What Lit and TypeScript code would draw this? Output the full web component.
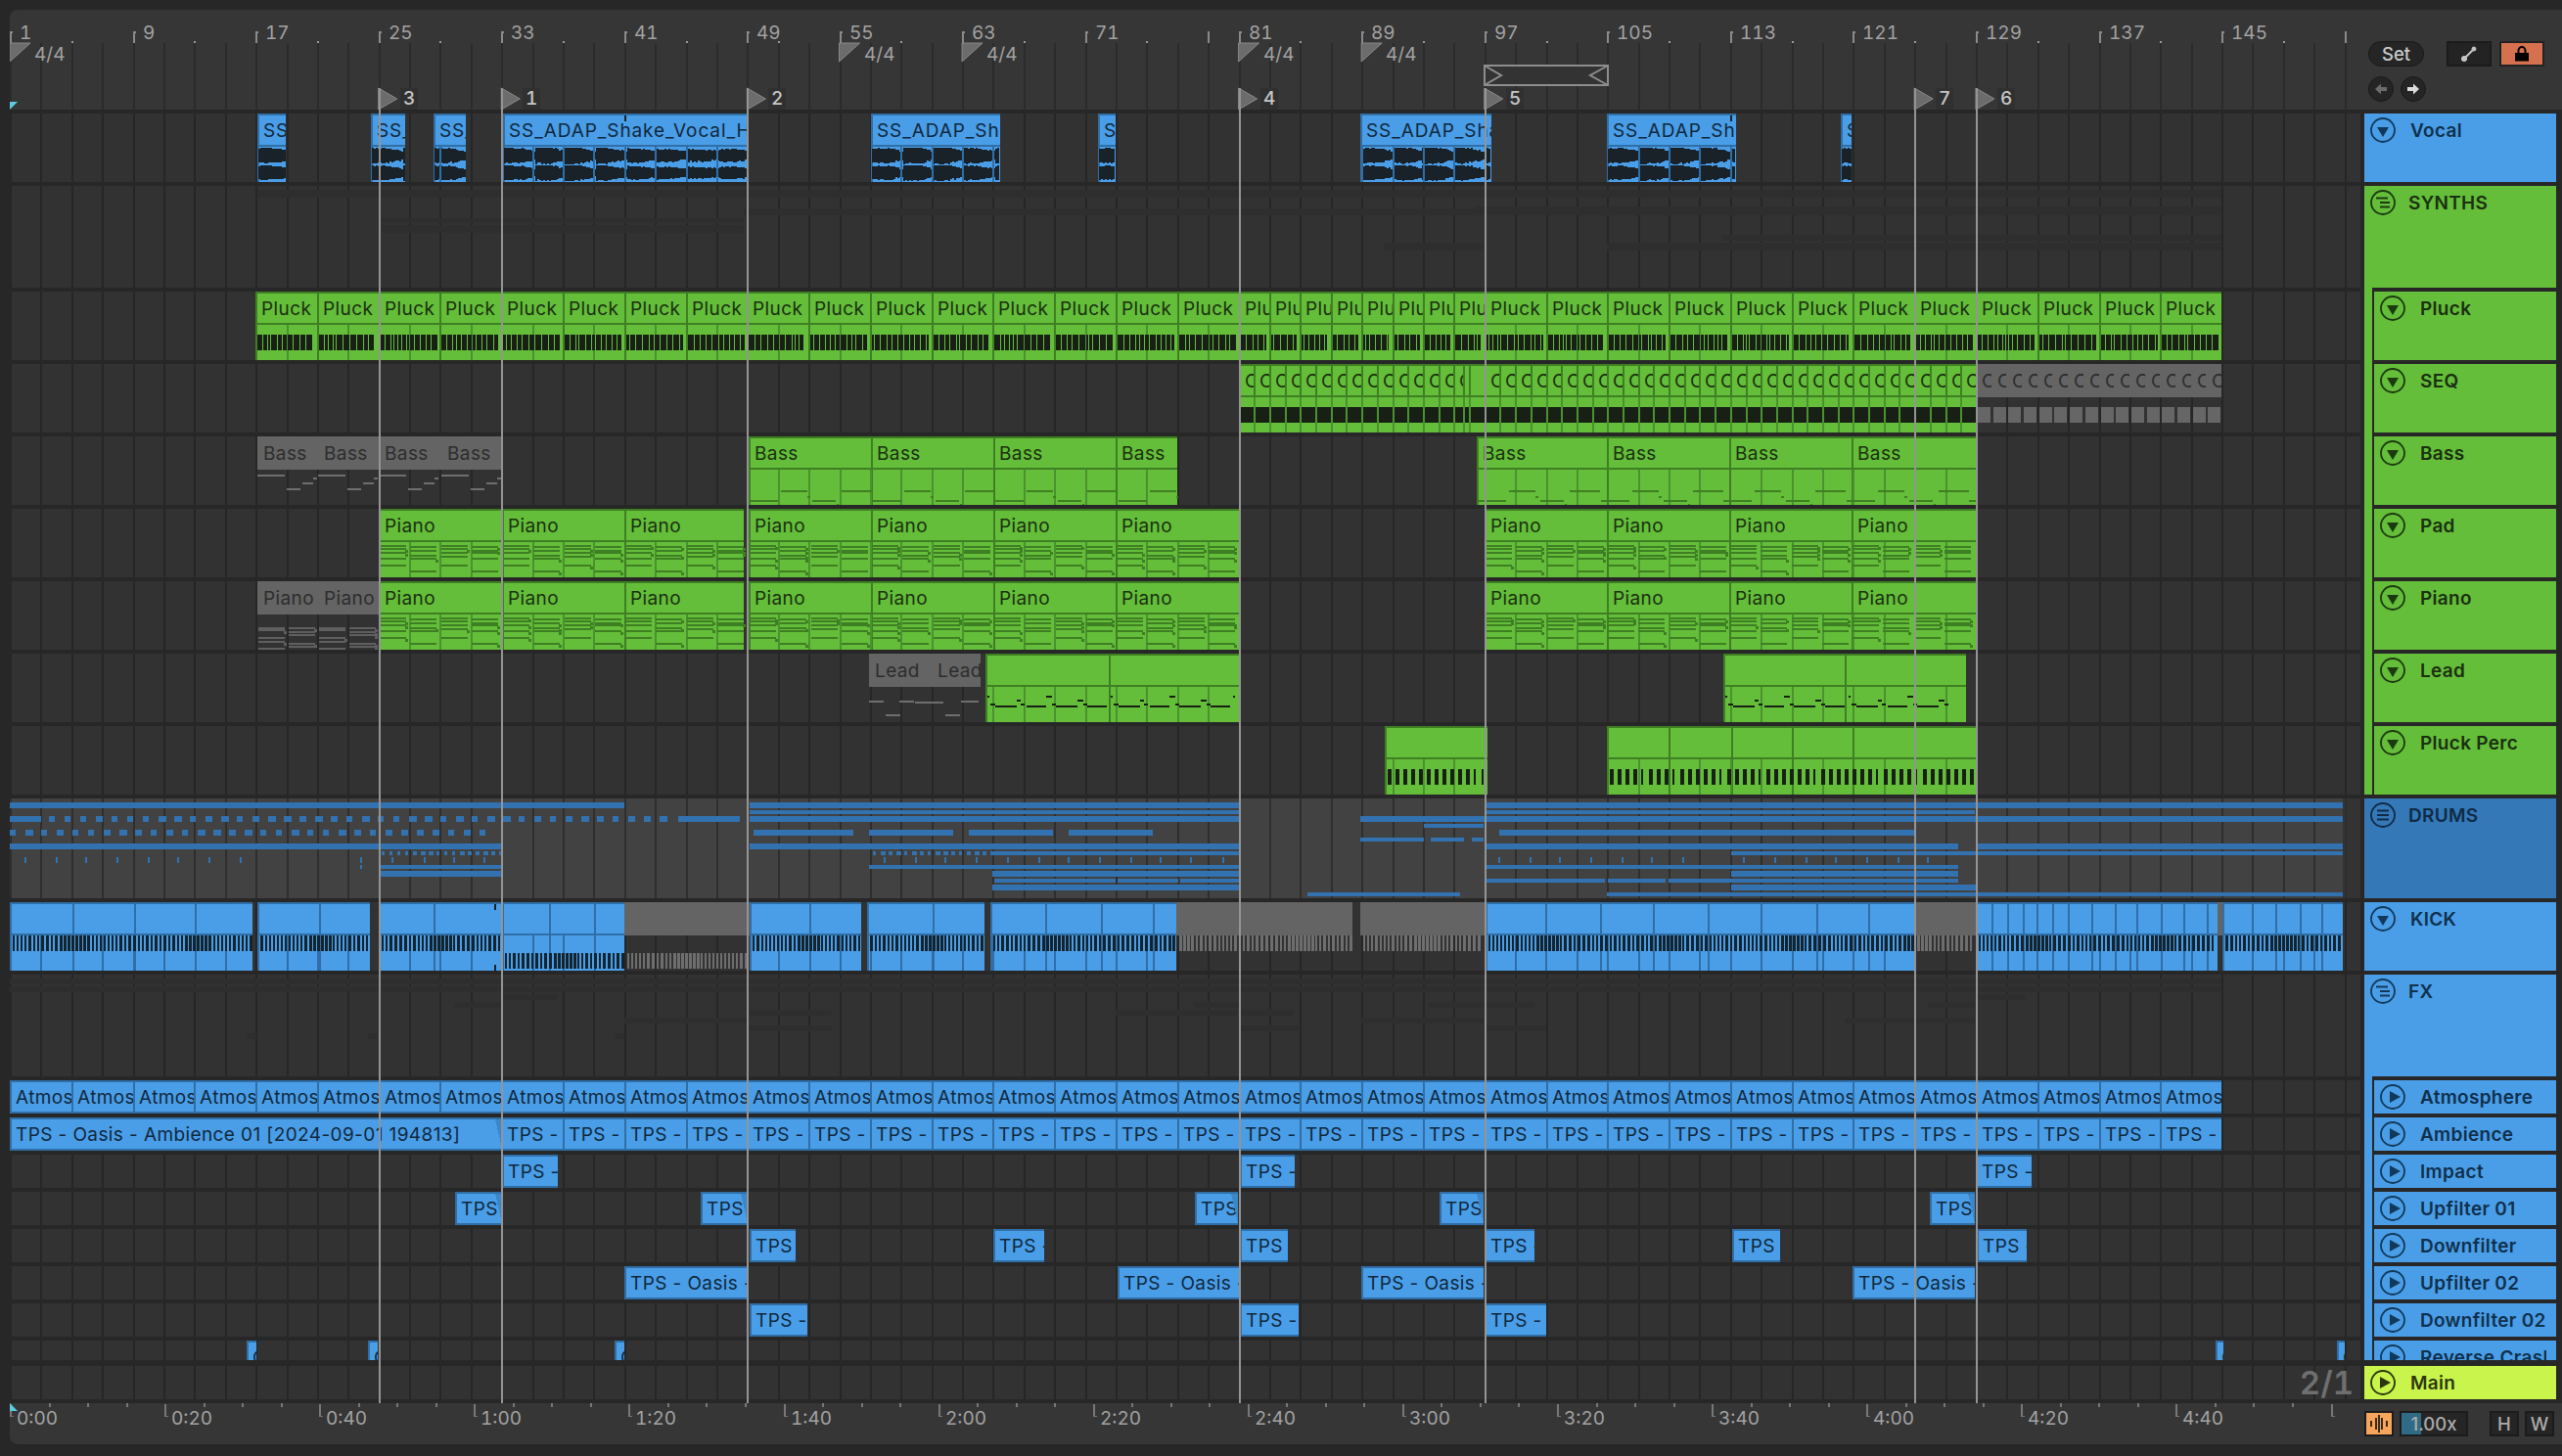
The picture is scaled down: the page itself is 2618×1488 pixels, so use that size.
import { LitElement, html, svg, css, nothing } from 'lit'
import { customElement } from 'lit/decorators.js'

const BAR = 15.695
const X0 = 10
const GRID = BAR * 2
const bx = (b: number) => X0 + (b - 1) * BAR

type Kind = 'g' | 'b' | 'x' | 'bs'
interface Clip { x: number; e: number; k: Kind; label?: string }
interface Mark { x: number; y: number; w: number; h: number; f: string }
interface Poly { p: string; f: string }
interface Row {
  name: string; h: number; color: string; icon: 'down' | 'play' | 'lines' | 'stagger'
  nested?: boolean; drums?: boolean; clips: Clip[]; marks: Mark[]; polys?: Poly[]
}

const G_LINE = '#4a9230'
const G_DARK = '#3f7f24'
const B_LINE = '#2f6ea6'
const INK = '#182016'
const WAVE = '#192229'
const KICK = '#14242f'
const GREY = '#6e6e6e'
const FAINT = '#2e2e2e'
const DRUM = '#3272b0'

let seed = 4711
const rnd = () => (seed = (seed * 16807) % 2147483647) / 2147483647

function segs(starts: number[], end: number, k: Kind, label?: string): Clip[] {
  return starts.map((x, i) => ({ x, e: starts[i + 1] ?? end, k, label }))
}
const range = (a: number, b: number, step: number) => {
  const out: number[] = []
  for (let v = a; v < b; v += step) out.push(v)
  return out
}
const bars = (a: number, b: number, step: number) => range(a, b, step).map(bx)

function gridIn(x0: number, x1: number, y: number, h: number, f: string): Mark[] {
  const out: Mark[] = []
  for (let i = 0; i < 80; i++) {
    const x = X0 + i * GRID
    if (x > x0 + 1 && x < x1 - 1) out.push({ x, y, w: 2, h, f })
  }
  return out
}

function pluckBars(x0: number, x1: number, y = 44, h = 16): Mark[] {
  const out: Mark[] = []
  const widths = [4, 5, 5, 4, 6, 3, 5, 2, 6]
  let x = x0 + 2
  while (x < x1 - 4) {
    const w = widths[Math.floor(rnd() * widths.length)]
    out.push({ x, y, w: Math.min(w, x1 - 3 - x), h, f: INK })
    x += w + 1
  }
  return out
}

function percBars(x0: number, x1: number): Mark[] {
  const out: Mark[] = []
  for (let x = x0 + 3; x < x1 - 2; x += 8) {
    const w = rnd() < 0.15 ? 2 : 4
    out.push({ x, y: 44, w, h: 16, f: INK })
  }
  return out
}

function kickBars(x0: number, x1: number, y: number, f: string): Mark[] {
  const out: Mark[] = []
  let x = Math.round(x0) + 3
  while (x < x1 - 2) {
    const p = (x - 10) % 125.5
    const dense = p > 50 && p < 76
    const w = dense ? 3 : rnd() < 0.45 ? 3 : 2
    out.push({ x, y, w, h: 16, f })
    x += w + (dense ? 1 : 2)
  }
  return out
}

function wave(x0: number, x1: number): Mark[] {
  const out: Mark[] = []
  for (let x = x0 + 1; x < x1 - 1; x += 2) {
    const t = ((x - x0) % GRID) / GRID
    const slow = 0.75 + 0.25 * Math.sin((x - x0) / 40)
    const a = 3.4 + 4.4 * slow * (1 - t * t * t) + rnd() * 1.3
    const h = Math.min(a, 8.5) * 2
    out.push({ x, y: 43 - h / 2, w: 2, h, f: WAVE })
    out.push({ x, y: 61 - h / 2, w: 2, h: h * 0.95, f: WAVE })
  }
  return out
}

const PIANO_LINES = [
  [37, 40, 44, 50, 57],
  [38, 42, 47, 50, 63],
  [37, 40, 44, 48, 57],
  [38, 42, 44, 50, 63],
]

function pianoNotes(x0: number, x1: number, f: string, lines = PIANO_LINES): Mark[] {
  const out: Mark[] = []
  let i = 0
  for (let x = x0 + 1; x < x1 - 2; x += GRID, i++) {
    for (const y of lines[i % 4]) {
      out.push({ x, y, w: Math.min(27, x1 - x), h: 2, f })
      if (rnd() < 0.45) out.push({ x: x + 26, y: y + 2, w: 3, h: 3, f })
    }
  }
  return out
}

function bassNotes(x0: number, x1: number): Mark[] {
  const out: Mark[] = []
  const pat: [number, number, number][] = [[0, 29, 65], [32, 59, 55], [59, 62, 61], [64, 88, 65], [89, 91, 69], [94, 125, 55]]
  for (let b = x0; b < x1; b += 125.5) {
    for (const [a, e, y] of pat) {
      if (b + a < x1) out.push({ x: b + a + 1, y, w: Math.min(e - a, x1 - b - a - 1), h: 2, f: G_DARK })
    }
  }
  return out
}

function leadNotes(x0: number, x1: number): Mark[] {
  const out: Mark[] = []
  const pat: [number, number, number][] = [
    [2, 4, 43], [5, 10, 51], [10, 32, 53], [32, 36, 47], [36, 40, 51], [42, 62, 53],
    [62, 68, 43], [68, 72, 51], [72, 94, 53], [94, 100, 47], [100, 104, 51], [104, 124, 53],
  ]
  for (let b = x0; b < x1; b += 125.5) {
    for (const [a, e, y] of pat) {
      if (b + e <= x1) out.push({ x: b + a, y, w: e - a, h: 2, f: INK })
    }
  }
  return out
}

function greenBody(clips: Clip[], notes: (c: Clip) => Mark[]): Mark[] {
  return clips.flatMap(c => (c.k === 'g' ? [...gridIn(c.x, c.e, 34, 36, G_LINE), ...notes(c)] : notes(c)))
}

const strip = (x: number, e: number, y: number, h: number, f = DRUM): Mark => ({ x, y, w: e - x, h, f })
function dashes(x0: number, x1: number, y: number, h: number, step: number, w: number): Mark[] {
  const out: Mark[] = []
  for (let x = x0; x < x1; x += step) {
    const n = w - Math.floor(rnd() * 3)
    out.push({ x: Math.round(x), y, w: n, h, f: DRUM })
  }
  return out
}

function buildDrums(): Mark[] {
  // row local y is absolute y minus 816
  const t = [
    25, 57, 87, 119, 151, 181, 213, 245, 368, 400, 433, 463, 494, 903, 935, 965, 997, 1029, 1061, 1091, 1123, 1155,
    1185, 1216, 1249, 1531, 1563, 1593, 1625, 1657, 1687, 1719, 1781, 1813, 1845, 1875, 1907, 1939, 1969,
  ]
  return [
    strip(10, 638, 4, 6), strip(766, 1266, 4, 6), strip(1517, 2394, 4, 6),
    strip(766, 1266, 12, 4), strip(1517, 2018, 12, 4),
    strip(10, 42, 18, 6), ...dashes(50, 690, 18, 6, 16, 8), strip(693, 756, 18, 6), strip(766, 1266, 18, 6), strip(1390, 2394, 18, 6),
    strip(1455, 1516, 26, 4),
    ...dashes(10, 505, 32, 6, 16, 8), strip(770, 872, 32, 6), strip(888, 974, 32, 6), strip(990, 1076, 32, 6), strip(1092, 1178, 32, 6), strip(1532, 1956, 32, 6),
    strip(1390, 1455, 40, 4), strip(1462, 1496, 40, 4), strip(1504, 1516, 40, 4),
    strip(10, 513, 46, 6), strip(766, 1266, 46, 6), strip(1518, 2001, 46, 6), strip(2019, 2394, 46, 6),
    ...dashes(390, 513, 54, 4, 8, 5), ...dashes(892, 1013, 54, 4, 8, 5), strip(1013, 1266, 54, 4), strip(1769, 2394, 54, 4),
    ...t.map(x => ({ x, y: 60, w: 2, h: 6, f: DRUM })),
    { x: 368, y: 68, w: 2, h: 4, f: DRUM }, strip(388, 513, 68, 4), strip(888, 1266, 68, 4), strip(1518, 2001, 68, 4),
    strip(388, 513, 74, 6), strip(1014, 1266, 74, 6), strip(1769, 2001, 74, 6),
    strip(1016, 1140, 82, 4), strip(1142, 1204, 82, 4), strip(1206, 1266, 82, 4), strip(1518, 1640, 82, 4), strip(1643, 1702, 82, 4), strip(1705, 2001, 82, 4),
    strip(1014, 1266, 88, 6), strip(1769, 2021, 88, 6),
    strip(1336, 1492, 96, 4), strip(1642, 2394, 96, 4),
  ]
}

function buildRows(): Row[] {
  const vocal: Clip[] = [
    [263, 292], [379, 414], [443, 476], [514, 764], [890, 1022], [1122, 1140], [1390, 1524], [1642, 1774], [1881, 1892],
  ].map(([x, e]) => ({ x, e, k: 'b', label: 'SS_ADAP_Shake_Vocal_Hook' }))

  const pluckStarts = [...bars(17, 81, 4), ...bars(81, 97, 2), ...bars(97, 145, 4)]
  const pluck = segs(pluckStarts, bx(145), 'g', 'Pluck')

  const seqStarts = [...bars(81, 95.4, 1), 1495, 1501, ...bars(97, 129, 1)]
  const seq = seqStarts.map((x, i): Clip => {
    const label = x === 1495 || x === 1501 ? undefined : 'C'
    return { x, e: seqStarts[i + 1] ?? bx(129), k: 'g', label }
  })
  const seqGrey = segs(bars(129, 145, 1), bx(145), 'x', 'C')

  const bassGreen = [...segs([765, 890, 1015, 1140], 1203, 'g', 'Bass'), ...segs([1509, 1642, 1767, 1892], 2019, 'g', 'Bass')]
  const bassGrey = segs([263, 325, 387, 451], 514, 'x', 'Bass')
  const pianoSets = [
    ...segs([387, 513, 638], 760, 'g', 'Piano'),
    ...segs([765, 890, 1015, 1140], 1266, 'g', 'Piano'),
    ...segs([1517, 1642, 1767, 1892], 2019, 'g', 'Piano'),
  ]
  const pianoGrey = segs([263, 325], 387, 'x', 'Piano')
  const leadGrey = segs([888, 952], 1002, 'x', 'Lead')
  const leadGreen = [...segs([1007, 1133], 1266, 'g'), ...segs([1761, 1885], 2009, 'g')]
  const perc = [...segs([1415], 1520, 'g'), ...segs([1642, 1705, 1769, 1831, 1893, 1956], 2019, 'g')]

  const kickBlue = [
    segs([10, 73.5, 137, 199], 258, 'b'),
    segs([263, 325.5], 378, 'b'),
    segs([387, 443, 513, 561, 607], 638, 'b'),
    segs([766, 827], 880, 'b'),
    segs([886, 953], 1006, 'b'),
    segs([1012, 1068, 1125, 1178], 1202, 'b'),
    segs([1518, 1579, 1635, 1689, 1745, 1799, 1856, 1909], 1956, 'b'),
    segs([2019, 2035, 2051, 2067, 2081, 2097, 2113, 2137, 2161, 2183, 2208, 2231, 2255], 2266, 'b'),
    segs([2271, 2301, 2325, 2350, 2372], 2394, 'b'),
  ].flat()
  const kickGrey: Clip[] = [
    { x: 638, e: 766, k: 'x' }, { x: 1202, e: 1382, k: 'x' }, { x: 1390, e: 1517, k: 'x' }, { x: 1956, e: 2019, k: 'x' }, { x: 2266, e: 2271, k: 'x' },
  ]

  const atmos = segs(bars(1, 145, 4), bx(145), 'bs', 'Atmosphere')
  const amb = [
    { x: 10, e: 513, k: 'bs' as Kind, label: 'TPS - Oasis - Ambience 01 [2024-09-01 194813]' },
    ...segs(bars(33, 145, 4), bx(145), 'bs', 'TPS - Oasis - Ambience'),
  ]
  const tps = (list: number[][], label: string): Clip[] => list.map(([x, e]) => ({ x, e, k: 'bs', label }))

  const fade = (e: number, f = '#3b87c9'): Poly => ({ p: `${e - 7},2 ${e},2 ${e},32`, f })

  return [
    {
      name: 'Vocal', h: 70, color: 'blue', icon: 'down', clips: vocal,
      marks: [
        ...vocal.flatMap(c => [...gridIn(c.x, c.e, 34, 36, B_LINE), ...wave(c.x, c.e)]),
        { x: 638, y: 2, w: 2, h: 6, f: WAVE }, { x: 1768, y: 2, w: 2, h: 6, f: WAVE },
      ],
    },
    {
      name: 'SYNTHS', h: 104, color: 'green', icon: 'stagger', clips: [],
      marks: [
        strip(263, 2270, 4, 8, FAINT), strip(387, 760, 33, 5, FAINT), strip(387, 760, 40, 8, FAINT), strip(760, 2270, 23, 7, FAINT),
        strip(1508, 2270, 21, 9, FAINT), strip(1760, 2270, 50, 6, FAINT), strip(1414, 1516, 58, 8, FAINT), strip(1642, 2270, 58, 8, FAINT),
      ],
    },
    {
      name: 'Pluck', h: 70, color: 'green', icon: 'down', nested: true, clips: pluck,
      marks: greenBody(pluck, c => pluckBars(c.x, c.e)),
    },
    {
      name: 'SEQ', h: 70, color: 'green', icon: 'down', nested: true, clips: [...seq, ...seqGrey],
      marks: [
        ...seq.flatMap(c => [
          { x: c.x + 2, y: 44, w: c.e - c.x - 2, h: 16, f: INK },
          { x: c.x, y: 34, w: 2, h: 36, f: G_LINE },
        ]),
        ...seqGrey.map(c => ({ x: c.x + 2, y: 44, w: c.e - c.x - 3, h: 16, f: '#666666' })),
      ],
    },
    {
      name: 'Bass', h: 70, color: 'green', icon: 'down', nested: true, clips: [...bassGrey, ...bassGreen],
      marks: [
        ...greenBody(bassGreen, () => []),
        ...bassGreen.filter(c => c.x === 765 || c.x === 1509).flatMap(c => bassNotes(c.x, c.x === 765 ? 1203 : 2019)),
        ...[263, 325, 387, 451].flatMap(x => [
          strip(x, x + 28, 39, 2, GREY), strip(x + 30, x + 44, 53, 2, GREY), strip(x + 46, x + 57, 47, 2, GREY), strip(x + 57, x + 61, 42, 2, GREY),
        ]),
      ],
    },
    {
      name: 'Pad', h: 70, color: 'green', icon: 'down', nested: true, clips: pianoSets,
      marks: greenBody(pianoSets, c => pianoNotes(c.x, c.e, G_DARK)),
    },
    {
      name: 'Piano', h: 70, color: 'green', icon: 'down', nested: true, clips: [...pianoGrey, ...pianoSets],
      marks: [
        ...greenBody(pianoSets, c => pianoNotes(c.x, c.e, G_DARK)),
        ...pianoGrey.flatMap(c =>
          pianoNotes(c.x, c.e, '#5f5f5f', [[47, 49, 57, 61, 68], [47, 51, 54, 63, 66], [47, 49, 57, 61, 68], [47, 51, 54, 63, 66]])),
      ],
    },
    {
      name: 'Lead', h: 70, color: 'green', icon: 'down', nested: true, clips: [...leadGrey, ...leadGreen],
      marks: [
        ...greenBody(leadGreen, () => []),
        ...leadNotes(1007, 1266), ...leadNotes(1761, 2009),
        strip(888, 903, 48, 2, GREY), strip(919, 934, 48, 2, GREY), strip(935, 964, 49, 2, GREY), strip(982, 1000, 48, 2, GREY),
        strip(905, 920, 62, 2, GREY), strip(966, 981, 62, 2, GREY),
      ],
    },
    {
      name: 'Pluck Perc', h: 70, color: 'green', icon: 'down', nested: true, clips: perc,
      marks: [...greenBody(perc, () => []), ...percBars(1415, 1520), ...percBars(1642, 2019)],
    },
    { name: 'DRUMS', h: 102, color: 'dblue', icon: 'lines', drums: true, clips: [], marks: buildDrums() },
    {
      name: 'KICK', h: 70, color: 'blue', icon: 'down', clips: [...kickBlue, ...kickGrey],
      marks: [
        ...kickBlue.flatMap(c => gridIn(c.x, c.e, 34, 36, B_LINE)),
        ...[[10, 258], [263, 378], [387, 513], [766, 880], [886, 1006], [1012, 1202], [1518, 1956], [2019, 2266], [2271, 2394]]
          .flatMap(([a, b]) => kickBars(a, b, 34, KICK)),
        ...kickBars(513, 638, 52, KICK), ...kickBars(638, 766, 52, GREY),
        ...kickBars(1202, 1382, 34, GREY), ...kickBars(1390, 1517, 34, GREY), ...kickBars(1956, 2019, 34, GREY),
        { x: 505, y: 2, w: 2, h: 6, f: WAVE }, { x: 505, y: 64, w: 2, h: 6, f: WAVE },
      ],
    },
    {
      name: 'FX', h: 104, color: 'blue', icon: 'stagger', clips: [],
      marks: [
        strip(10, 2270, 4, 6, FAINT), strip(10, 2270, 12, 6, FAINT), strip(513, 570, 20, 6, FAINT), strip(464, 513, 28, 6, FAINT),
        strip(638, 764, 44, 6, FAINT), strip(766, 850, 36, 6, FAINT), strip(766, 850, 52, 6, FAINT), strip(1140, 1265, 36, 6, FAINT),
        strip(252, 262, 60, 6, FAINT), strip(376, 386, 60, 6, FAINT), strip(628, 638, 60, 6, FAINT),
        strip(1267, 1322, 36, 6, FAINT), strip(1220, 1266, 28, 6, FAINT), strip(1460, 1568, 28, 6, FAINT),
        strip(1390, 1516, 44, 6, FAINT), strip(1267, 1327, 52, 6, FAINT), strip(1517, 1580, 52, 6, FAINT),
        strip(1885, 2018, 44, 6, FAINT), strip(2019, 2070, 20, 6, FAINT), strip(1970, 2018, 28, 6, FAINT),
      ],
    },
    { name: 'Atmosphere', h: 34, color: 'blue', icon: 'play', nested: true, clips: atmos, marks: [] },
    {
      name: 'Ambience', h: 34, color: 'blue', icon: 'play', nested: true, clips: amb, marks: [],
      polys: [fade(513)],
    },
    {
      name: 'Impact', h: 34, color: 'blue', icon: 'play', nested: true, marks: [],
      clips: tps([[513, 570], [1267, 1323], [2019, 2076]], 'TPS - Oasis - Impact'),
    },
    {
      name: 'Upfilter 01', h: 34, color: 'blue', icon: 'play', nested: true, marks: [],
      clips: tps([[465, 513], [716, 764], [1221, 1265], [1471, 1516], [1972, 2018]], 'TPS - Oasis'),
      polys: [513, 764, 1265, 1516, 2018].map(e => fade(e)),
    },
    {
      name: 'Downfilter', h: 34, color: 'blue', icon: 'play', nested: true, marks: [],
      clips: tps([[766, 813], [1015, 1067], [1267, 1316], [1517, 1568], [1770, 1819], [2020, 2071]], 'TPS - Oasis'),
    },
    {
      name: 'Upfilter 02', h: 34, color: 'blue', icon: 'play', nested: true, marks: [],
      clips: tps([[638, 764], [1142, 1266], [1391, 1516], [1893, 2018]], 'TPS - Oasis - Upfilter'),
    },
    {
      name: 'Downfilter 02', h: 34, color: 'blue', icon: 'play', nested: true, marks: [],
      clips: tps([[766, 825], [1267, 1327], [1517, 1580]], 'TPS - Oasis'),
    },
    {
      name: 'Reverse Crash', h: 34, color: 'blue', icon: 'play', nested: true, marks: [],
      clips: tps([[252, 262], [376, 386], [628, 638], [2264, 2272], [2388, 2396]], 'OO'),
    },
  ]
}

const RULER_LABELS = [1, 9, 17, 25, 33, 41, 49, 55, 63, 71, 81, 89, 97, 105, 113, 121, 129, 137, 145]
const RULER_MID = [5, 13, 21, 29, 37, 45, 51, 59, 67, 75, 85, 93, 101, 109, 117, 125, 133, 141, 149]
const SIGS = [1, 55, 63, 81, 89]
const LOCATORS: [number, string][] = [[25, '3'], [33, '1'], [49, '2'], [81, '4'], [97, '5'], [125, '7'], [129, '6']]
const SEC20 = 158.1
const TIMES = ['0:00', '0:20', '0:40', '1:00', '1:20', '1:40', '2:00', '2:20', '2:40', '3:00', '3:20', '3:40', '4:00', '4:20', '4:40']

function paths(marks: Mark[]) {
  const byFill = new Map<string, string[]>()
  for (const m of marks) {
    const x = Math.round(m.x - X0)
    const y = Math.round(m.y)
    const w = Math.max(1, Math.round(m.w))
    const h = Math.max(1, Math.round(m.h))
    if (!byFill.has(m.f)) byFill.set(m.f, [])
    byFill.get(m.f)!.push(`M${x} ${y}h${w}v${h}h${-w}z`)
  }
  return [...byFill].map(([f, d]) => svg`<path fill=${f} d=${d.join('')}></path>`)
}

function icon(kind: Row['icon']) {
  const inner = {
    down: svg`<path class="fill" d="M7 10h12l-6 10z"></path>`,
    play: svg`<path class="fill" d="M10 7l11 6-11 6z"></path>`,
    lines: svg`<path class="line" d="M7 8.500h12M7 13h12M7 17.500h12"></path>`,
    stagger: svg`<path class="line" d="M6 8.500h12M10 13h10M10 17.500h10"></path>`,
  }[kind]
  return html`<svg class="icon" viewBox="0 0 26 26"><circle cx="13" cy="13" r="12"></circle>${inner}</svg>`
}

@customElement('app-root')
export class AppRoot extends LitElement {
  static styles = css`
    :host {
      display: block;
      width: 2618px;
      height: 1488px;
      overflow: hidden;
      background: #272727;
      font-family: Inter, 'Liberation Sans', sans-serif;
    }
    .page {
      position: relative;
      box-sizing: border-box;
      height: 1488px;
      padding: 10px 0 12px 10px;
      display: flex;
      flex-direction: column;
      gap: 4px;
    }
    .top {
      height: 102px;
      display: flex;
      background: #363636;
      border-top-left-radius: 8px;
    }
    .tl {
      position: relative;
      width: 2402px;
      display: flex;
      flex-direction: column;
    }
    .ruler { height: 34px; }
    .tl-grid {
      height: 68px;
      background: repeating-linear-gradient(90deg, #2b2b2b 0, #2b2b2b 2px, transparent 2px, transparent 31.39px);
    }
    .over { position: absolute; left: 0; top: 0; pointer-events: none; shape-rendering: crispEdges; }
    .smooth { shape-rendering: auto; }
    .num {
      position: absolute;
      font-size: 19px;
      line-height: 22px;
      font-variant-numeric: tabular-nums;
      color: #a2a2a2;
      white-space: nowrap;
    }
    .loc-label { padding: 0 3px; background: #303030; color: #c6c6c6; font-weight: 500; }
    .side {
      display: flex;
      flex-direction: column;
      gap: 10px;
      padding: 32px 0 0 8px;
    }
    .side-row { display: flex; gap: 8px; align-items: center; }
    .pill {
      box-sizing: border-box;
      width: 57px;
      height: 26px;
      border-radius: 13px;
      background: #252525;
      border: 1px solid #191919;
      color: #c9c9c9;
      font-size: 18.5px;
      font-weight: 500;
      line-height: 24px;
      text-align: center;
      margin-right: 15px;
    }
    .box {
      box-sizing: border-box;
      width: 46px;
      height: 26px;
      background: #232323;
      border: 2px solid #1b1b1b;
      display: grid;
      place-items: center;
    }
    .box.lock { background: #d5714f; border-color: #222; }
    .nav { display: flex; gap: 7px; }
    .round {
      box-sizing: border-box;
      width: 26px;
      height: 26px;
      border-radius: 50%;
      background: #252525;
      border: 1px solid #191919;
      display: grid;
      place-items: center;
    }
    .tracks {
      height: 1274px;
      overflow: hidden;
      display: flex;
      flex-direction: column;
      gap: 4px;
      flex: none;
    }
    .row { display: flex; gap: 4px; flex: none; }
    .h34 { height: 34px; }
    .h70 { height: 70px; }
    .h102 { height: 102px; }
    .h104 { height: 104px; }
    .lane {
      position: relative;
      width: 2402px;
      flex: none;
      background:
        repeating-linear-gradient(90deg, #262626 0, #262626 2px, transparent 2px, transparent 31.39px),
        #323232;
    }
    .lane.drums {
      background:
        repeating-linear-gradient(90deg, #2e2e2e 0, #2e2e2e 2px, transparent 2px, transparent 31.39px),
        linear-gradient(90deg, #424242 2384px, #333 2384px);
    }
    .marks { position: absolute; left: 0; top: 0; pointer-events: none; shape-rendering: crispEdges; }
    .clip {
      position: absolute;
      top: 0;
      height: 100%;
      box-sizing: border-box;
      overflow: hidden;
    }
    .hd {
      display: flex;
      align-items: center;
      box-sizing: border-box;
      white-space: nowrap;
      font-size: 19px;
      letter-spacing: 0.4px;
    }
    .clip.g { background: #64be3a; border-left: 2px solid #3f7f24; border-top: 2px solid #3f7f24; }
    .clip.g .hd { height: 32px; padding-left: 4px; color: #1b3010; border-bottom: 2px solid #3f7f24; }
    .clip.b { background: #4a9ee8; border-left: 2px solid #2f6ea6; border-top: 2px solid #2f6ea6; }
    .clip.b .hd { height: 32px; padding-left: 4px; color: #10283c; letter-spacing: 0.9px; border-bottom: 2px solid #2f6ea6; }
    .clip.bs { background: #4a9ee8; border: 2px solid #2f6ea6; border-right: 0; }
    .clip.bs .hd { height: 30px; padding-left: 4px; color: #10283c; }
    .clip.x .hd { height: 34px; padding-left: 6px; background: #646464; color: #2d2d2d; }
    .head {
      position: relative;
      flex: none;
      width: 196px;
      box-sizing: border-box;
      padding-left: 6px;
      display: flex;
      gap: 15px;
      font-size: 19px;
      font-weight: 600;
      letter-spacing: 0.3px;
      white-space: nowrap;
      background: var(--c);
      color: var(--t);
    }
    .head span { line-height: 36px; height: 34px; max-width: 129px; overflow: hidden; }
    .head.blue { --c: #4a9ee8; --t: #10304c; --s: #12395a; }
    .head.green { --c: #64be3a; --t: #1b3010; --s: #1c3a10; }
    .head.dblue { --c: #3478b8; --t: #0f2b45; --s: #0f2b45; }
    .head.lime { --c: #c8f44c; --t: #2c360f; --s: #2c360f; }
    .head.group { gap: 13px; }
    .head.nested {
      padding-left: 16px;
      background: linear-gradient(90deg, var(--c) 8px, #272727 8px, #272727 10px, var(--c) 10px);
    }
    .head.nested::before {
      content: '';
      position: absolute;
      left: 0;
      top: -4px;
      width: 8px;
      height: 4px;
      background: var(--c);
    }
    .icon { width: 26px; height: 26px; margin-top: 4px; flex: none; }
    .icon circle { fill: none; stroke: var(--s); stroke-width: 1.8; }
    .icon .fill { fill: var(--s); }
    .icon .line { fill: none; stroke: var(--s); stroke-width: 2; }
    .main-row { margin-top: 2px; }
    .zoom-label {
      position: absolute;
      right: 7px;
      top: 0;
      line-height: 34px;
      font-size: 33px;
      font-weight: 600;
      font-variant-numeric: tabular-nums;
      color: #6f6f6f;
    }
    .bottom {
      height: 42px;
      display: flex;
      background: #363636;
      border-bottom-left-radius: 8px;
    }
    .tr { position: relative; width: 2402px; flex: none; }
    .bctl {
      display: flex;
      align-items: flex-start;
      gap: 6px;
      padding: 8px 0 0 4px;
    }
    .bctl > div {
      box-sizing: border-box;
      height: 26px;
      border: 2px solid #1c1c1c;
      background: #252525;
      color: #ababab;
      font-size: 18.5px;
      font-weight: 500;
      line-height: 22px;
      text-align: center;
    }
    .bctl > .wavebtn { width: 30px; background: #f5a65b; display: grid; place-items: center; }
    .bctl > .speed { width: 70px; background: linear-gradient(90deg, #2f6b85 20px, #252525 20px); }
    .hw { width: 30px; }
    .hw.first { margin-left: 16px; }
    .loc {
      position: absolute;
      top: 90px;
      height: 1344px;
      width: 2px;
      background: #949494;
      pointer-events: none;
    }
  `

  private rows = buildRows()

  private renderClip(c: Clip) {
    const left = Math.round(c.x - X0)
    const width = Math.round(c.e - X0) - left
    return html`<div class="clip ${c.k}" style="left:${left}px;width:${width}px"><div class="hd">${c.label ?? nothing}</div></div>`
  }

  private renderRow(r: Row) {
    const group = r.icon === 'lines' || r.icon === 'stagger'
    return html`
      <div class="row h${r.h}">
        <div class="lane ${r.drums ? 'drums' : ''}">
          ${r.clips.map(c => this.renderClip(c))}
          ${r.marks.length || r.polys
            ? html`<svg class="marks" width="2402" height=${r.h}>
                ${paths(r.marks)}
                ${(r.polys ?? []).map(p => svg`<polygon points=${this.shift(p.p)} fill=${p.f}></polygon>`)}
              </svg>`
            : nothing}
        </div>
        <div class="head ${r.color} ${r.nested ? 'nested' : ''} ${group ? 'group' : ''}">
          ${icon(r.icon)}<span>${r.name}</span>
        </div>
      </div>
    `
  }

  private shift(points: string) {
    return points.split(' ').map(p => {
      const [x, y] = p.split(',').map(Number)
      return `${x - X0},${y}`
    }).join(' ')
  }

  private renderTop() {
    return html`
      <div class="tl">
        <div class="ruler"></div>
        <div class="tl-grid"></div>
        <svg class="over" width="2402" height="102">
          ${paths([
            ...RULER_LABELS.flatMap(b => [
              { x: bx(b), y: 22, w: 2, h: 12, f: '#8a8a8a' }, { x: bx(b), y: 22, w: 3, h: 2, f: '#8a8a8a' },
            ]),
            ...RULER_MID.map(b => ({ x: bx(b), y: 32, w: 2, h: 2, f: '#9a9a9a' })),
            { x: bx(79), y: 22, w: 2, h: 12, f: '#8a8a8a' },
            { x: bx(153), y: 22, w: 2, h: 12, f: '#8a8a8a' },
          ])}
          ${SIGS.map(b => {
            const x = bx(b) - X0
            return svg`<polygon class="smooth" points="${x},34 ${x + 21},34 ${x},53" fill="#6c6c6c" stroke="#8a8a8a"></polygon>`
          })}
          ${LOCATORS.map(([b]) => {
            const x = bx(b) - X0
            return svg`<polygon class="smooth" points="${x},80 ${x + 19},91 ${x},102" fill="#6c6c6c" stroke="#8a8a8a"></polygon>`
          })}
          <polygon class="smooth" points="0,94 8,94 0,102" fill="#5ccbe0"></polygon>
          <g class="smooth" fill="none" stroke="#8d8d8d" stroke-width="2">
            <rect x="1507" y="57" width="126" height="20" fill="#333"></rect>
            <path d="M1507 57l17 10-17 10M1633 57l-18 10 18 10"></path>
          </g>
        </svg>
        ${RULER_LABELS.map(b => html`<div class="num" style="left:${Math.round(bx(b) - X0 + 10)}px;top:13px">${b}</div>`)}
        ${SIGS.map(b => html`<div class="num" style="left:${Math.round(bx(b) - X0 + 25)}px;top:35px">4/4</div>`)}
        ${LOCATORS.map(([b, n]) => html`<div class="num loc-label" style="left:${Math.round(bx(b) - X0 + 22)}px;top:80px">${n}</div>`)}
      </div>
      <div class="side">
        <div class="side-row">
          <div class="pill">Set</div>
          <div class="box">
            <svg width="18" height="18" viewBox="0 0 18 18" fill="#c4c4c4" stroke="#c4c4c4">
              <path d="M4 14L14 4" stroke-width="2"></path><circle cx="4" cy="14" r="2.600"></circle><circle cx="14" cy="4" r="2"></circle>
            </svg>
          </div>
          <div class="box lock">
            <svg width="16" height="16" viewBox="0 0 16 16">
              <path d="M4.500 7V4.600a3.500 3.500 0 0 1 7 0V7" fill="none" stroke="#000" stroke-width="2"></path>
              <rect x="1" y="7" width="14" height="8.500" fill="#000"></rect>
            </svg>
          </div>
        </div>
        <div class="nav">
          <div class="round">
            <svg width="14" height="14" viewBox="0 0 14 14" fill="#6c6c6c"><path d="M1 7l6-5.500V5h6v4H7v3.500z"></path></svg>
          </div>
          <div class="round">
            <svg width="14" height="14" viewBox="0 0 14 14" fill="#dcdcdc"><path d="M13 7L7 1.500V5H1v4h6v3.500z"></path></svg>
          </div>
        </div>
      </div>
    `
  }

  private renderBottom() {
    const ticks: Mark[] = []
    for (let i = 0; i < 61; i++) {
      const x = X0 + i * (SEC20 / 4)
      if (i % 4 === 0) {
        ticks.push({ x, y: 1, w: 2, h: 13, f: '#777777' }, { x, y: 13, w: 4, h: 1, f: '#777777' })
      } else {
        ticks.push({ x, y: 0, w: 2, h: 4, f: '#777777' })
      }
    }
    return html`
      <div class="tr">
        <svg class="over" width="2402" height="42">
          ${paths(ticks)}
          <polygon class="smooth" points="0,0 8,8 0,8" fill="#5ccbe0"></polygon>
        </svg>
        ${TIMES.map((t, i) => html`<div class="num" style="left:${Math.round(i * SEC20 + 7)}px;top:5px">${t}</div>`)}
      </div>
      <div class="bctl">
        <div class="wavebtn">
          <svg width="22" height="18" viewBox="0 0 22 18" stroke="#3b2a12" stroke-width="2">
            <path d="M3 6v6M8 3v12M11 0v18M14 3v12M19 6v6"></path>
          </svg>
        </div>
        <div class="speed">1.00x</div>
        <div class="hw first">H</div>
        <div class="hw">W</div>
      </div>
    `
  }

  render() {
    return html`
      <div class="page">
        <div class="top">${this.renderTop()}</div>
        <div class="tracks">${this.rows.map(r => this.renderRow(r))}</div>
        <div class="row h34 main-row">
          <div class="lane"><div class="zoom-label">2/1</div></div>
          <div class="head lime">${icon('play')}<span>Main</span></div>
        </div>
        <div class="bottom">${this.renderBottom()}</div>
        ${LOCATORS.map(([b]) => html`<div class="loc" style="left:${Math.round(bx(b))}px"></div>`)}
      </div>
    `
  }
}
